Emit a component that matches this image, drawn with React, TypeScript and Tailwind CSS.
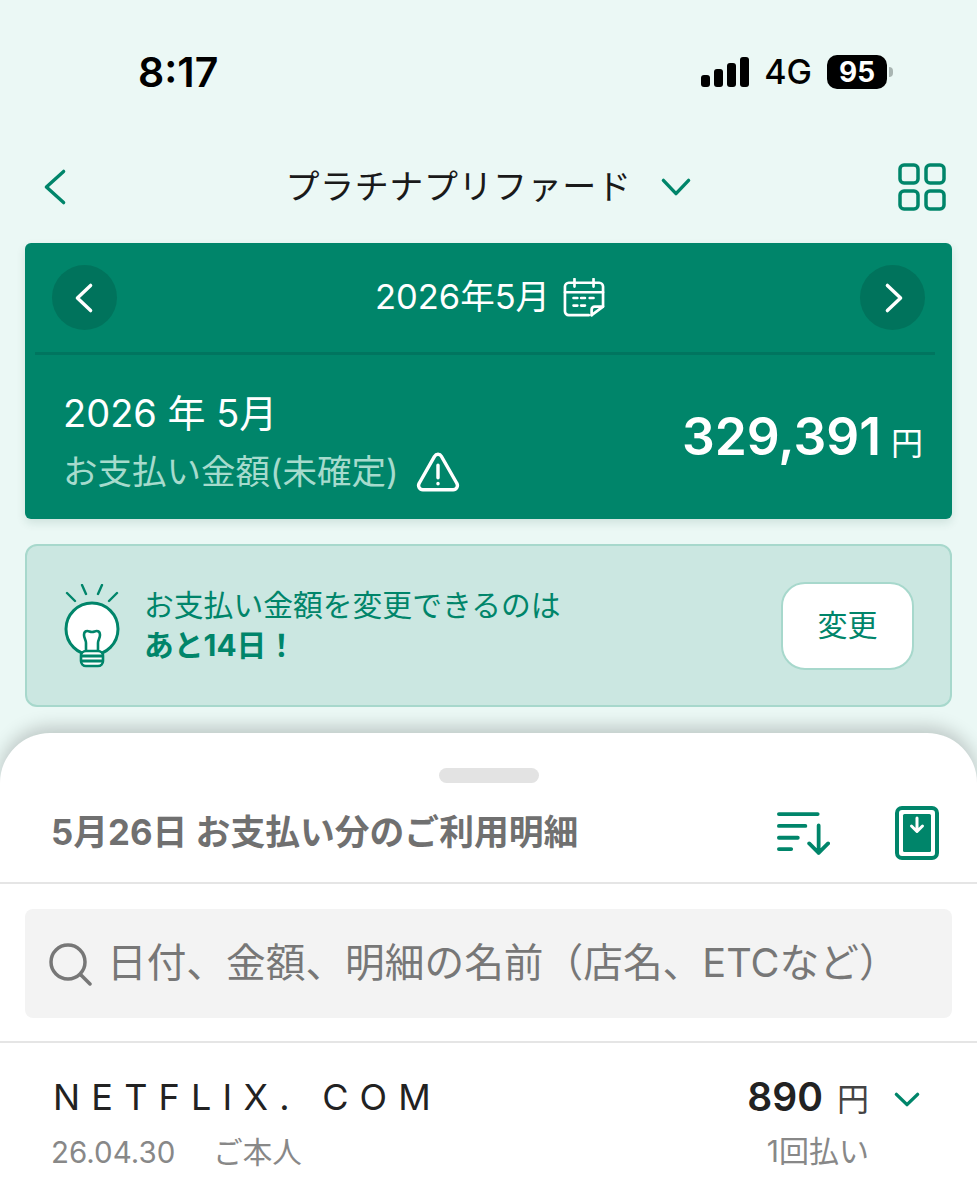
// Card statement screen: month summary, change notice, and usage list sheet

const FONT = "font-['Inter','Noto_Sans_CJK_JP',sans-serif]";

function SignalBars() {
  return (
    <svg width="50" height="32" viewBox="0 0 50 32" fill="#000">
      <rect x="1" y="19" width="9" height="12" rx="3" />
      <rect x="14" y="13" width="9" height="18" rx="3" />
      <rect x="27" y="7" width="9" height="24" rx="3" />
      <rect x="40" y="1" width="9" height="30" rx="3" />
    </svg>
  );
}

function Chevron({ dir, w, h, sw, color }: { dir: "left" | "right" | "down"; w: number; h: number; sw: number; color: string }) {
  const p = sw;
  const d =
    dir === "left"
      ? `M${w - p} ${p}L${p} ${h / 2}L${w - p} ${h - p}`
      : dir === "right"
        ? `M${p} ${p}L${w - p} ${h / 2}L${p} ${h - p}`
        : `M${p} ${p}L${w / 2} ${h - p}L${w - p} ${p}`;
  return (
    <svg width={w} height={h} viewBox={`0 0 ${w} ${h}`} fill="none" stroke={color} strokeWidth={sw} strokeLinecap="round" strokeLinejoin="round">
      <path d={d} />
    </svg>
  );
}

function GridIcon() {
  return (
    <svg width="48" height="48" viewBox="0 0 48 48" fill="none" stroke="#00856a" strokeWidth="3.5">
      <rect x="2" y="2" width="18" height="18" rx="4" />
      <rect x="28" y="2" width="18" height="18" rx="4" />
      <rect x="2" y="28" width="18" height="18" rx="4" />
      <rect x="28" y="28" width="18" height="18" rx="4" />
    </svg>
  );
}

function CalendarIcon() {
  return (
    <svg width="42" height="40" viewBox="0 0 44 42" fill="none" stroke="#fff" strokeWidth="2.8" strokeLinecap="round" strokeLinejoin="round">
      <path d="M27 39H6a4 4 0 0 1-4-4V9a4 4 0 0 1 4-4h32a4 4 0 0 1 4 4v21L30 39" />
      <path d="M2 15h40M12 1v8M32 1v8" />
      <path d="M30 39v-6a3 3 0 0 1 3-3h9" />
      <path d="M11 21h4M19 21h4M28 21h4M11 29h4M19 29h4" />
    </svg>
  );
}

function WarningIcon() {
  return (
    <svg width="44" height="42" viewBox="0 0 46 42" fill="none" stroke="#fff" strokeWidth="3.6" strokeLinecap="round" strokeLinejoin="round">
      <path d="M19.5 4.500a4 4 0 0 1 7 0l16 28a4.500 4.500 0 0 1-4 7h-31a4.500 4.500 0 0 1-4-7z" />
      <path d="M23 14v13M23 33v.2" />
    </svg>
  );
}

function BulbIcon() {
  return (
    <svg width="56" height="84" viewBox="0 0 56 84" fill="none" stroke="#00856a" strokeWidth="2.6" strokeLinecap="round" strokeLinejoin="round">
      <path d="M3 9l8 8M18 1l4 9M38 1l-4 9M53 9l-8 8" strokeWidth="2.4" />
      <circle cx="28" cy="45" r="26" fill="#fff" strokeWidth="3" />
      <path d="M22 68V59c0-3-2-5-2-8 0-3 2-4 3.500-4s2.500 1 4.500 1 3-1 4.500-1 3.500 1 3.500 4c0 3-2 5-2 8v9" />
      <rect x="17" y="67" width="22" height="15" rx="5" fill="#fff" />
      <path d="M18 72h20M18 77h20" strokeWidth="3" strokeLinecap="butt" />
    </svg>
  );
}

function SortIcon() {
  return (
    <svg width="53" height="46" viewBox="0 0 56 46" fill="none" stroke="#00856a" strokeWidth="4" strokeLinecap="round" strokeLinejoin="round">
      <path d="M2 3h41M2 15.500h28M2 28h20M2 40h13" />
      <path d="M44 15v29M34 34l10 10 10-10" />
    </svg>
  );
}

function DownloadCardIcon() {
  return (
    <svg width="44" height="54" viewBox="0 0 44 54" fill="none">
      <rect x="2" y="2" width="40" height="50" rx="5" stroke="#00856a" strokeWidth="4" />
      <rect x="8" y="8" width="28" height="38" rx="1.500" fill="#00856a" />
      <path d="M22 12v13M16.500 20l5.500 5.500 5.500-5.500" stroke="#fff" strokeWidth="3" strokeLinecap="round" strokeLinejoin="round" />
    </svg>
  );
}

function SearchIcon() {
  return (
    <svg width="44" height="44" viewBox="0 0 44 44" fill="none" stroke="#777" strokeWidth="3.5" strokeLinecap="round">
      <circle cx="20" cy="20" r="17" />
      <path d="M33 33l9 9" />
    </svg>
  );
}

export default function App() {
  return (
    <div className={`${FONT} w-[977px] h-[1200px] overflow-hidden flex flex-col bg-[#ebf8f5] text-[#1a1a1a]`}>
      {/* status bar */}
      <div className="h-[144px] shrink-0 flex items-center justify-between pl-[138px] pr-[84px]">
        <span className="text-[41px] font-semibold text-black leading-none">8:17</span>
        <div className="flex items-center gap-[14px]">
          <SignalBars />
          <span className="text-[34px] font-medium text-black leading-none">4G</span>
          <div className="flex items-center gap-[2px] ml-[1px]">
            <div className="w-[60px] h-[34px] rounded-[10px] bg-black text-white flex items-center justify-center text-[28px] font-bold leading-none">
              95
            </div>
            <div className="w-[4px] h-[10px] rounded-r-full bg-[#a9b5b2]" />
          </div>
        </div>
      </div>

      {/* title row */}
      <div className="h-[86px] mb-[13px] shrink-0 flex items-center justify-between pl-[43px] pr-[31px]">
        <Chevron dir="left" w={24} h={38} sw={3.4} color="#00856a" />
        <div className="flex items-center gap-[28px] pl-[12px]">
          <span className="text-[34px] leading-none tracking-[0.6px]">プラチナプリファード</span>
          <Chevron dir="down" w={32} h={20} sw={3.4} color="#00856a" />
        </div>
        <GridIcon />
      </div>

      {/* month card */}
      <div className="mx-[25px] h-[276px] shrink-0 rounded-[6px] bg-[#00856a] text-white flex flex-col shadow-[0_4px_10px_rgba(0,70,55,0.12)]">
        <div className="h-[109px] shrink-0 flex items-center justify-between px-[27px]">
          <div className="w-[65px] h-[65px] rounded-full bg-[#00735c] flex items-center justify-center pr-[2px]">
            <Chevron dir="left" w={20} h={32} sw={3.4} color="#fff" />
          </div>
          <div className="flex items-center gap-[13px] pl-[3px]">
            <span className="text-[34.5px] leading-none">2026年5月</span>
            <CalendarIcon />
          </div>
          <div className="w-[65px] h-[65px] rounded-full bg-[#00735c] flex items-center justify-center pl-[2px]">
            <Chevron dir="right" w={20} h={32} sw={3.4} color="#fff" />
          </div>
        </div>
        <div className="ml-[10px] mr-[17px] h-[3px] shrink-0 bg-[#00755f]" />
        <div className="flex-1 flex items-center justify-between pl-[38px] pr-[29px]">
          <div className="mt-[13px] flex flex-col gap-[19px]">
            <span className="text-[38px] leading-none">2026 年 5月</span>
            <div className="flex items-center gap-[17px]">
              <span className="text-[34.5px] leading-none text-[#a6dbcd]">お支払い金額(未確定)</span>
              <WarningIcon />
            </div>
          </div>
          <div className="flex items-baseline gap-[10px]">
            <span className="text-[51.5px] font-semibold leading-none">329,391</span>
            <span className="text-[32px] leading-none">円</span>
          </div>
        </div>
      </div>

      {/* change notice */}
      <div className="mx-[25px] mt-[25px] h-[163px] shrink-0 rounded-[12px] border-[2px] border-[#a7d8cc] bg-[#cbe7e1] flex items-center justify-between pl-[37px] pr-[36px]">
        <div className="flex items-center gap-[24px] text-[#00856a]">
          <BulbIcon />
          <div className="flex flex-col gap-[10px]">
            <span className="text-[29.8px] leading-none">お支払い金額を変更できるのは</span>
            <span className="text-[29.8px] font-bold leading-none">あと14日！</span>
          </div>
        </div>
        <div className="w-[133px] h-[88px] rounded-[24px] border-[2px] border-[#a7d8cc] bg-white flex items-center justify-center text-[30px] text-[#00856a]">
          変更
        </div>
      </div>

      {/* usage sheet */}
      <div className="mt-[26px] flex-1 rounded-t-[50px] bg-white flex flex-col shadow-[0_-6px_18px_rgba(0,0,0,0.2)]">
        <div className="pt-[35px] flex justify-center">
          <div className="w-[100px] h-[15px] rounded-full bg-[#e3e3e3]" />
        </div>
        <div className="h-[101px] shrink-0 flex items-center justify-between pl-[51px] pr-[38px] border-b-[2px] border-[#e5e5e5]">
          <span className="text-[34.8px] font-bold leading-none text-[#707070]">5月26日 お支払い分のご利用明細</span>
          <div className="flex items-center gap-[65px]">
            <SortIcon />
            <DownloadCardIcon />
          </div>
        </div>
        <div className="pt-[25px] pb-[23px] px-[25px] border-b-[2px] border-[#e5e5e5]">
          <div className="h-[109px] rounded-[8px] bg-[#f3f3f3] flex items-center gap-[15px] pl-[23px]">
            <SearchIcon />
            <span className="text-[39.7px] leading-none text-[#777]">日付、金額、明細の名前（店名、ETCなど）</span>
          </div>
        </div>
        <div className="flex justify-between pt-[36px] pl-[51px] pr-[56px]">
          <div className="flex flex-col gap-[23px]">
            <span className="pl-[2px] text-[36px] leading-none tracking-[11.2px] text-[#222]">NETFLIX.&nbsp;COM</span>
            <div className="flex gap-[38px] text-[29.5px] leading-none text-[#888]">
              <span>26.04.30</span>
              <span>ご本人</span>
            </div>
          </div>
          <div className="-mt-[2px] flex flex-col items-end gap-[20px]">
            <div className="flex items-center gap-[24px]">
              <div className="flex items-baseline gap-[14px]">
                <span className="text-[39px] font-semibold leading-none text-[#222]">890</span>
                <span className="text-[32px] leading-none text-[#444]">円</span>
              </div>
              <div className="mt-[6px] flex">
                <Chevron dir="down" w={28} h={17} sw={3.4} color="#00856a" />
              </div>
            </div>
            <span className="pr-[52px] text-[30px] leading-none text-[#888]">1回払い</span>
          </div>
        </div>
      </div>
    </div>
  );
}
